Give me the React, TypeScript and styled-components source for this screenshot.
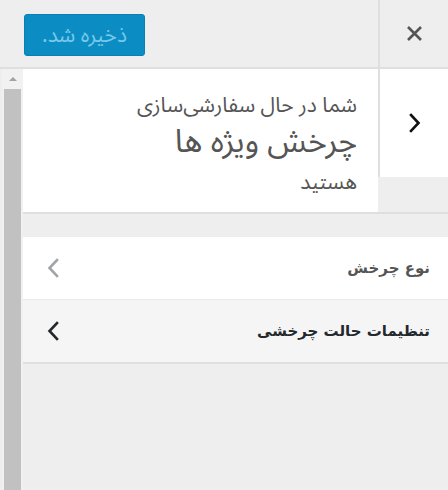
import React from 'react';
import styled, { createGlobalStyle } from 'styled-components';

const Global = createGlobalStyle`
  html, body { margin: 0; padding: 0; background: #eee; }
  body { font-family: "Noto Sans Arabic", "DejaVu Sans", sans-serif; }
  * { box-sizing: border-box; }
`;

const Frame = styled.div`
  width: 448px;
  height: 490px;
  overflow: hidden;
  display: flex;
  flex-direction: column;
  background: #eee;
  direction: rtl;
`;

const Header = styled.header`
  height: 69px;
  flex: none;
  display: flex;
  border-bottom: 2px solid #dfdfdf;
  background: #eee;
`;

const CloseButton = styled.button`
  width: 70px;
  flex: none;
  border: 0;
  border-left: 2px solid #dfdfdf;
  background: transparent;
  display: flex;
  align-items: center;
  justify-content: center;
  padding: 0;
  color: #555;
  cursor: pointer;
`;

const SaveArea = styled.div`
  flex: 1;
  display: flex;
  align-items: center;
  justify-content: flex-end;
  padding: 3px 0 0 24px;
`;

const SaveButton = styled.button`
  width: 121px;
  height: 42px;
  border-radius: 3px;
  background: #0b8dc4;
  border: 1px solid #0a7fb3;
  color: #79c8e8;
  font-family: "Noto Sans Arabic", "DejaVu Sans", sans-serif;
  font-size: 21px;
  line-height: 40px;
  padding: 0 0 2px;
  direction: rtl;
`;

const Body = styled.div`
  flex: 1;
  display: flex;
  min-height: 0;
`;

const Content = styled.div`
  flex: 1;
  display: flex;
  flex-direction: column;
`;

const Scrollbar = styled.div`
  width: 21px;
  margin-left: 2px;
  flex: none;
  background: #f1f1f1;
  display: flex;
  flex-direction: column;
  align-items: center;
  padding-top: 8px;
`;

const ArrowUp = styled.div`
  width: 0;
  height: 0;
  border-left: 4px solid transparent;
  border-right: 4px solid transparent;
  border-bottom: 4px solid #a3a3a3;
`;

const Thumb = styled.div`
  width: 17px;
  flex: 1;
  margin-top: 8px;
  background: #c1c1c1;
`;

const Info = styled.section`
  height: 145px;
  flex: none;
  display: flex;
  border-bottom: 2px solid #dfdfdf;
`;

const BackButton = styled.button`
  width: 70px;
  height: 108px;
  flex: none;
  border: 0;
  border-left: 2px solid #dfdfdf;
  background: #fff;
  display: flex;
  align-items: center;
  justify-content: center;
  padding: 0 0 0 2px;
  color: #111;
`;

const InfoText = styled.div`
  flex: 1;
  background: #fff;
  padding: 23px 21px 0 0;
  color: #555;
  display: flex;
  flex-direction: column;
  align-items: flex-start;
`;

const Small = styled.span`
  font-size: 21px;
  line-height: 26px;
`;

const Title = styled.strong`
  font-size: 32px;
  font-weight: normal;
  line-height: 36px;
  margin: 6px 0 9px;
`;

const Menu = styled.ul`
  list-style: none;
  margin: 23px 0 0;
  padding: 0;
`;

const Item = styled.li<{ $active?: boolean }>`
  height: ${p => (p.$active ? 64 : 63)}px;
  display: flex;
  align-items: center;
  justify-content: space-between;
  padding: 0 18px 0 24px;
  background: ${p => (p.$active ? '#f5f5f5' : '#fff')};
  border-bottom: ${p => (p.$active ? '2px solid #dfdfdf' : '1px solid #eaeaea')};
  color: ${p => (p.$active ? '#23282d' : '#555')};
  font-family: "DejaVu Sans", sans-serif;
  font-size: 15px;
  font-weight: bold;
`;

const Chevron = ({ color }: { color: string }) => (
  <svg width="12" height="20" viewBox="0 0 12 20">
    <path d="M10 2 L2.5 10 L10 18" fill="none" stroke={color} strokeWidth="2.6" strokeLinecap="square" strokeLinejoin="miter" />
  </svg>
);

export default function App() {
  return (
    <>
      <Global />
      <Frame>
        <Header>
          <CloseButton aria-label="بستن">
            <svg width="17" height="17" viewBox="0 0 17 17">
              <path d="M2 2 L15 15 M15 2 L2 15" stroke="#555" strokeWidth="2.6" />
            </svg>
          </CloseButton>
          <SaveArea>
            <SaveButton disabled>ذخیره شد.</SaveButton>
          </SaveArea>
        </Header>
        <Body>
          <Content>
            <Info>
              <BackButton aria-label="بازگشت">
                <svg width="12" height="20" viewBox="0 0 12 20">
                  <path d="M2 2 L9.5 10 L2 18" fill="none" stroke="#111" strokeWidth="2.6" strokeLinecap="square" />
                </svg>
              </BackButton>
              <InfoText>
                <Small>شما در حال سفارشی‌سازی</Small>
                <Title>چرخش ویژه ها</Title>
                <Small>هستید</Small>
              </InfoText>
            </Info>
            <Menu>
              <Item>
                <span>نوع چرخش</span>
                <Chevron color="#a0a5aa" />
              </Item>
              <Item $active>
                <span>تنظیمات حالت چرخشی</span>
                <Chevron color="#23282d" />
              </Item>
            </Menu>
          </Content>
          <Scrollbar>
            <ArrowUp />
            <Thumb />
          </Scrollbar>
        </Body>
      </Frame>
    </>
  );
}
